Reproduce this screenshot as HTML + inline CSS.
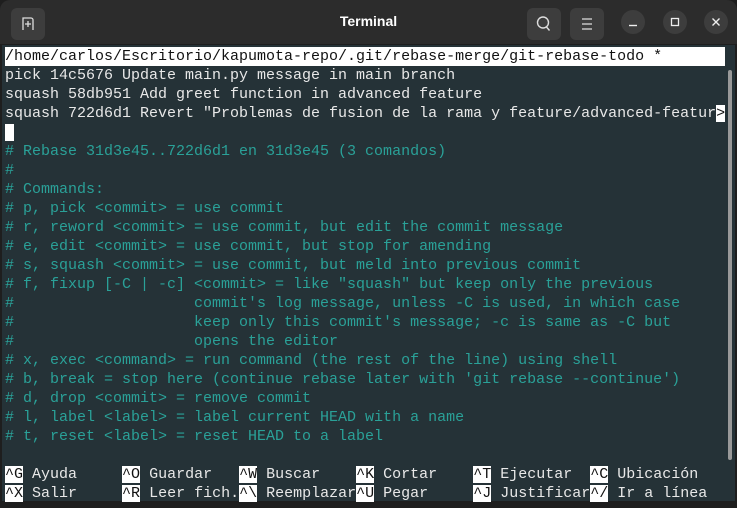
<!DOCTYPE html>
<html><head><style>
*{margin:0;padding:0;box-sizing:border-box}
body{width:737px;height:508px;background:#1e1e1e;overflow:hidden;font-family:"Liberation Sans",sans-serif;position:relative}
.title{position:absolute;left:0;top:0;width:737px;height:44px;background:#2c2c2c;border-radius:10px 10px 0 0}
.title .t{position:absolute;left:0;right:0;top:13px;text-align:center;color:#fff;font-weight:bold;font-size:14px}
.btn{position:absolute;top:8px;width:34px;height:32px;background:#3d3d3d;border-radius:6px}
.btn svg,.cir svg{position:absolute;left:0;top:0}
.cir{position:absolute;top:10px;width:24px;height:24px;border-radius:12px;background:#3d3d3d}
.term{position:absolute;left:2px;top:45px;width:733px;height:456px;background:#253237}
.sb{position:absolute;left:728px;top:70px;width:4px;height:390px;background:#999;border-radius:2px}
pre{position:absolute;left:5px;top:47px;font-family:"Liberation Mono",monospace;font-size:15px;line-height:19px;color:#e8e8e8;white-space:pre}
.h{background:#fff;color:#111;display:inline-block;width:720px}
.c{color:#2aa198}
.i{background:#fff;color:#111}
</style></head><body>
<div class="title">
<div class="btn" style="left:11px"><svg width="34" height="32"><path d="M12 22V10h8a2 2 0 0 1 2 2v10M17 13v6M14 16h6" stroke="#ddd" stroke-width="1.3" fill="none"/></svg></div>
<div class="t">Terminal</div>
<div class="btn" style="left:527px"><svg width="34" height="32"><circle cx="16" cy="14.5" r="5.5" stroke="#ddd" stroke-width="1.4" fill="none"/><path d="M19.5 19l3 3.5" stroke="#ddd" stroke-width="1.4"/></svg></div>
<div class="btn" style="left:570px"><svg width="34" height="32"><path d="M12 11h10M12 16h10M12 21h10" stroke="#ddd" stroke-width="1.3"/></svg></div>
<div class="cir" style="left:621px"><svg width="24" height="24"><path d="M8 15.5h8" stroke="#eee" stroke-width="1.4"/></svg></div>
<div class="cir" style="left:663px"><svg width="24" height="24"><rect x="8.5" y="8.5" width="7" height="7" stroke="#eee" stroke-width="1.3" fill="none"/></svg></div>
<div class="cir" style="left:704px"><svg width="24" height="24"><path d="M8.5 8.5l7 7M15.5 8.5l-7 7" stroke="#eee" stroke-width="1.4"/></svg></div>
</div>
<div class="term"></div>
<div class="sb"></div>
<pre><span class="h">/home/carlos/Escritorio/kapumota-repo/.git/rebase-merge/git-rebase-todo *</span>
pick 14c5676 Update main.py message in main branch
squash 58db951 Add greet function in advanced feature
squash 722d6d1 Revert "Problemas de fusion de la rama y feature/advanced-featur<span class="i">&gt;</span>
<span class="i"> </span>
<span class="c"># Rebase 31d3e45..722d6d1 en 31d3e45 (3 comandos)
#
# Commands:
# p, pick &lt;commit&gt; = use commit
# r, reword &lt;commit&gt; = use commit, but edit the commit message
# e, edit &lt;commit&gt; = use commit, but stop for amending
# s, squash &lt;commit&gt; = use commit, but meld into previous commit
# f, fixup [-C | -c] &lt;commit&gt; = like "squash" but keep only the previous
#                    commit's log message, unless -C is used, in which case
#                    keep only this commit's message; -c is same as -C but
#                    opens the editor
# x, exec &lt;command&gt; = run command (the rest of the line) using shell
# b, break = stop here (continue rebase later with 'git rebase --continue')
# d, drop &lt;commit&gt; = remove commit
# l, label &lt;label&gt; = label current HEAD with a name
# t, reset &lt;label&gt; = reset HEAD to a label</span>

<span class="i">^G</span> Ayuda     <span class="i">^O</span> Guardar   <span class="i">^W</span> Buscar    <span class="i">^K</span> Cortar    <span class="i">^T</span> Ejecutar  <span class="i">^C</span> Ubicación
<span class="i">^X</span> Salir     <span class="i">^R</span> Leer fich.<span class="i">^\</span> Reemplazar<span class="i">^U</span> Pegar     <span class="i">^J</span> Justificar<span class="i">^/</span> Ir a línea</pre>
</body></html>
